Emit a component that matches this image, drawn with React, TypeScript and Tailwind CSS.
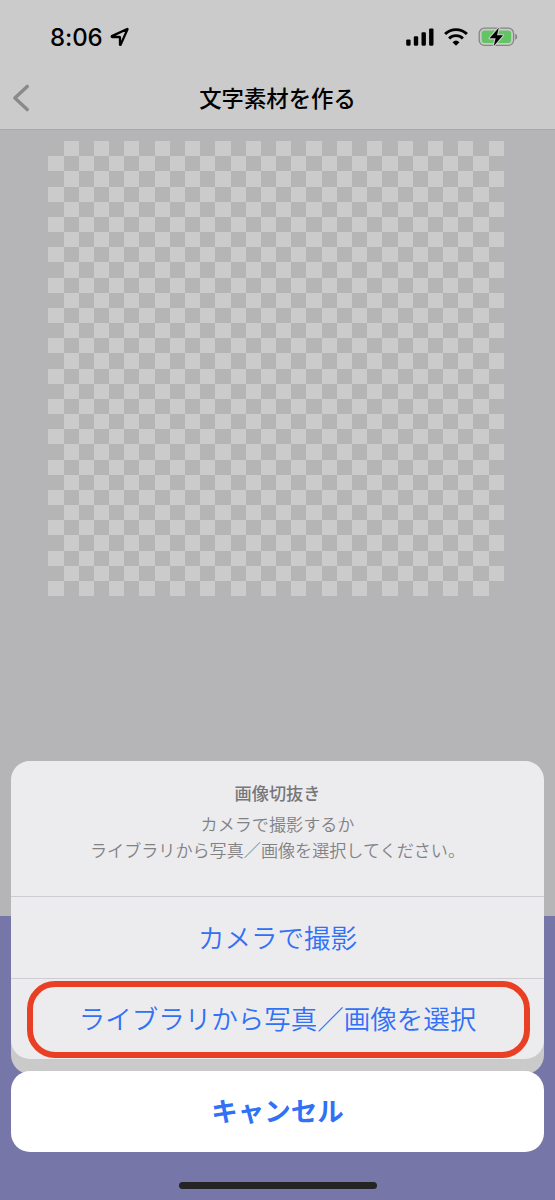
import React from 'react';

const CELLS = Array.from({ length: 900 }, (_, i) => (Math.floor(i / 30) + (i % 30)) % 2 === 1);

const StatusBar: React.FC = () => (
  <div className="flex h-[74px] items-center justify-between pl-[50px] pr-[37px] text-black">
    <div className="flex items-center">
      <span className="w-[53px] whitespace-nowrap pt-[2px] font-['Inter',sans-serif] text-[24px] font-medium leading-none tracking-[-0.1px]">8:06</span>
      <svg className="ml-[7px]" width="20" height="20" viewBox="0 0 20 20" fill="none" stroke="currentColor" strokeWidth="2.3" strokeLinejoin="round">
        <path d="M17.2 2 1.9 9.1Q1.4 9.9 2.2 10h7.3q.5 0 .5.5V17.5q.1.7.7.1L17.5 2.3q.1-.4-.3-.3Z" />
      </svg>
    </div>
    <div className="flex items-center">
      <svg width="28" height="18" viewBox="0 0 28 18" fill="currentColor">
        <rect x="0.2" y="11.5" width="4.4" height="6.2" rx="1.1" />
        <rect x="7.8" y="8.3" width="4.4" height="9.4" rx="1.1" />
        <rect x="15.5" y="4.3" width="4.4" height="13.4" rx="1.1" />
        <rect x="23.1" y="0.5" width="4.4" height="17.2" rx="1.1" />
      </svg>
      <svg className="ml-[10px]" width="24" height="18" viewBox="0 0 24 18" fill="none" stroke="currentColor" strokeWidth="2.9">
        <path d="M1.1 6.1a15.4 15.4 0 0 1 21.8 0" />
        <path d="M5.1 10.5a9.8 9.8 0 0 1 13.8 0" />
        <path d="M8.5 14.2a5.2 5.2 0 0 1 7 0L12 17.7Z" fill="currentColor" stroke="none" />
      </svg>
      <svg className="ml-[10px]" width="40" height="20" viewBox="0 0 40 20">
        <rect x="1.2" y="1.2" width="34.4" height="17.2" rx="5.2" fill="none" stroke="#858585" strokeWidth="1.3" />
        <rect x="3.6" y="3.6" width="29.6" height="12.4" rx="3" fill="#62c462" />
        <path d="M37.2 6.8q2 .7 2 3t-2 3Z" fill="#858585" />
        <path d="M20.8.8 11.6 11.3h6L15.8 19 25 8.3h-6Z" fill="#000" stroke="#cbcbcb" strokeWidth="2.2" strokeLinejoin="round" paintOrder="stroke" />
      </svg>
    </div>
  </div>
);

const Header: React.FC = () => (
  <header className="h-[130px] border-b border-[#a9a9ac] bg-[#cbcbcb]">
    <StatusBar />
    <div className="grid h-[48px] grid-cols-[40px_1fr_40px] items-center">
      <svg className="ml-[12px]" width="18" height="28" viewBox="0 0 18 28" fill="none" stroke="#8a8a8a" strokeWidth="3.4" strokeLinecap="round" strokeLinejoin="round">
        <path d="M15.2 2.4 2.9 14l12.3 11.6" />
      </svg>
      <h1 className="pb-[2px] text-center text-[22.4px] font-medium leading-none text-black">文字素材を作る</h1>
    </div>
  </header>
);

const Canvas: React.FC = () => (
  <div className="ml-[48.4px] mt-[11px] grid h-[455px] w-[455.4px] grid-cols-[repeat(30,minmax(0,1fr))] grid-rows-[repeat(30,minmax(0,1fr))] bg-[#b5b5b5]">
    {CELLS.map((light, i) => (
      <div key={i} className={light ? 'bg-[#cbcbcb]' : 'bg-[#b5b5b5]'} />
    ))}
  </div>
);

const ActionSheet: React.FC = () => (
  <div className="absolute inset-x-0 bottom-0 flex flex-col px-[11px]">
    <div className="h-[313px] rounded-[19px] bg-[#cacaca]">
      <div className="h-[298px] overflow-hidden rounded-[19px] bg-[#ececee] text-center">
        <div className="h-[136px] border-b border-[#cdcdd1] pt-[19px] text-[17.2px] text-[#828285]">
          <p className="font-medium leading-[25px] text-[#77777a]">画像切抜き</p>
          <p className="mt-[6px] text-[17.1px] font-[350] leading-[26px]">
            カメラで撮影するか
            <br />
            ライブラリから写真／画像を選択してください。
          </p>
        </div>
        <button className="block h-[82px] w-full border-b border-[#cdcdd1] text-[26.5px] font-[350] leading-none text-[#3071f6]">カメラで撮影</button>
        <div className="pl-[16px] pr-[14px] pt-[2px]">
          <button className="h-[77px] w-full rounded-[28px] border-[6px] border-[#e94025] pb-[2px] pr-[2px] text-[26.5px] font-[350] leading-none text-[#3071f6]">
            ライブラリから写真／画像を選択
          </button>
        </div>
      </div>
    </div>
    <button className="z-10 -mt-[3px] h-[81px] rounded-[19px] bg-white pb-[2px] text-[26.5px] font-bold leading-none text-[#3071f6]">キャンセル</button>
    <div className="mx-auto mb-[11px] mt-[30px] h-[7px] w-[198px] rounded-full bg-[#242424]" />
  </div>
);

const App: React.FC = () => (
  <div className="relative flex h-[1200px] w-[555px] flex-col overflow-hidden bg-[#b5b5b8] font-['Noto_Sans_CJK_JP',sans-serif]">
    <Header />
    <main className="flex-1">
      <Canvas />
    </main>
    <footer className="h-[284px] bg-[#7676a9]" />
    <ActionSheet />
  </div>
);

export default App;
